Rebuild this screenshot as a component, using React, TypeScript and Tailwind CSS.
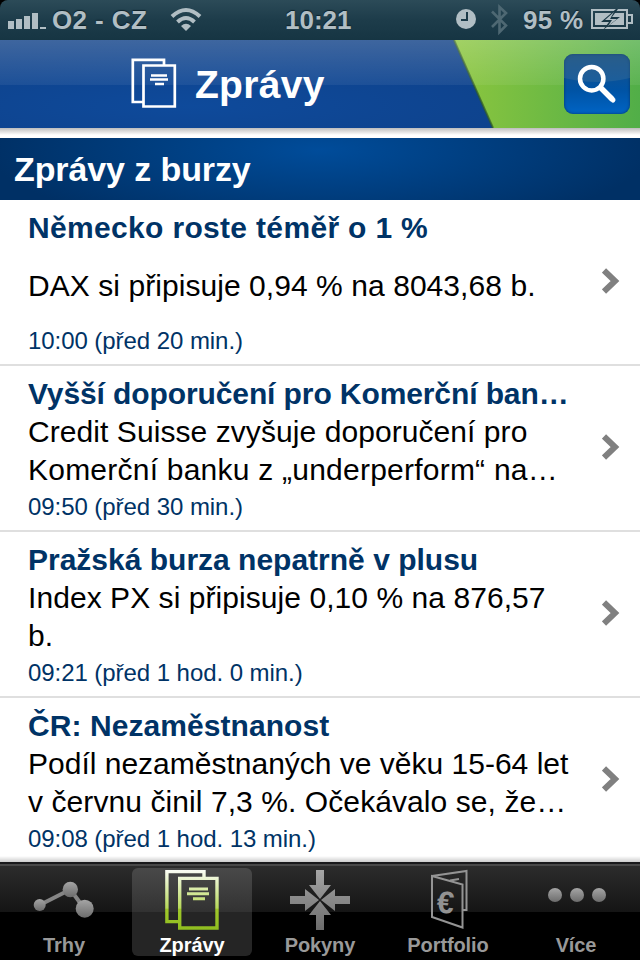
import React from 'react';

interface NewsLine {
  text: string;
  spacing: string;
}

interface NewsItem {
  title: string;
  titleSpacing: string;
  lines: NewsLine[];
  time: string;
}

const news: NewsItem[] = [
  {
    title: 'Německo roste téměř o 1 %',
    titleSpacing: 'tracking-[0.33px]',
    lines: [{ text: 'DAX si připisuje 0,94 % na 8043,68 b.', spacing: 'tracking-[0.06px] pt-0.5' }],
    time: '10:00 (před 20 min.)',
  },
  {
    title: 'Vyšší doporučení pro Komerční ban…',
    titleSpacing: 'tracking-[-0.1px]',
    lines: [
      { text: 'Credit Suisse zvyšuje doporučení pro', spacing: 'tracking-[0.07px]' },
      { text: 'Komerční banku z „underperform“ na…', spacing: 'tracking-[0.23px]' },
    ],
    time: '09:50 (před 30 min.)',
  },
  {
    title: 'Pražská burza nepatrně v plusu',
    titleSpacing: 'tracking-normal',
    lines: [
      { text: 'Index PX si připisuje 0,10 % na 876,57', spacing: 'tracking-[0.06px]' },
      { text: 'b.', spacing: 'tracking-normal' },
    ],
    time: '09:21 (před 1 hod. 0 min.)',
  },
  {
    title: 'ČR: Nezaměstnanost',
    titleSpacing: 'tracking-[0.07px]',
    lines: [
      { text: 'Podíl nezaměstnaných ve věku 15-64 let', spacing: 'tracking-normal' },
      { text: 'v červnu činil 7,3 %. Očekávalo se, že…', spacing: 'tracking-[0.08px]' },
    ],
    time: '09:08 (před 1 hod. 13 min.)',
  },
];

const StatusBar: React.FC = () => (
  <div className="h-10 shrink-0 bg-black">
    <div className="h-10 flex items-center rounded-t-lg bg-gradient-to-b from-[#2c4b58] via-[#1d3c4a] via-50% to-[#163543] text-[#b1bec4] text-[26px] font-bold leading-10 whitespace-nowrap [text-shadow:0_-1px_1px_#0c2029]">
      <svg className="ml-2 w-[38px] h-10 shrink-0" viewBox="0 0 38 40" fill="currentColor">
        <path d="M0 21h6v8H0zM8 19h6v10H8zM16 16h6v13h-6zM24 13h6v16h-6zM32 27h6v2h-6z" />
      </svg>
      <span className="ml-1.5 w-[96px] shrink-0 tracking-[0.4px]">O2 - CZ</span>
      <svg className="ml-[22px] w-8 h-10 shrink-0" viewBox="0 0 32 40" fill="none" stroke="currentColor" strokeWidth="4">
        <path d="M2 16.5Q16 3.5 30 16.5M7.500 22Q16 14 24.500 22" />
        <path d="M11 26Q16 21.500 21 26L16 31Z" fill="currentColor" stroke="none" />
      </svg>
      <span className="ml-[83px] w-[68px] shrink-0">10:21</span>
      <svg className="ml-[103px] w-5 h-10 shrink-0" viewBox="0 0 20 40">
        <circle cx="10" cy="19" r="10" fill="currentColor" />
        <path d="M11 12v8H5" fill="none" stroke="#1c3a48" strokeWidth="2" />
      </svg>
      <svg className="ml-3.5 w-5 h-10 shrink-0" viewBox="0 0 20 40" fill="none" stroke="#4e6873" strokeWidth="2.600">
        <path d="M2 11.500 16 25.500 9.500 32V7L16 13 2 27" />
      </svg>
      <span className="ml-[13px] w-[62px] shrink-0 tracking-[0.3px]">95 %</span>
      <svg className="ml-[6px] w-[43px] h-10 shrink-0" viewBox="0 0 43 40">
        <path d="M1 10h35v18H1zM37 15h4v8h-4" fill="none" stroke="currentColor" strokeWidth="2" />
        <path d="M4 13h29v12H4z" fill="currentColor" />
        <path d="M25 9 10 22h8l-6 8 17-13h-8l6-8z" fill="#183744" />
        <path d="M23 12 14 20h7l-4 6 9-7h-7z" fill="currentColor" />
      </svg>
    </div>
  </div>
);

const Header: React.FC = () => (
  <header className="relative h-[88px] shrink-0 flex items-center bg-[radial-gradient(ellipse_at_30%_75%,#0e4a9b,#0e3c80)]">
    <svg className="absolute inset-0 w-full h-full" viewBox="0 0 640 88">
      <defs>
        <linearGradient id="green" x1="0" x2="1">
          <stop offset="0" stopColor="#8cc63e" />
          <stop offset="1" stopColor="#51ae48" />
        </linearGradient>
        <linearGradient id="gloss" x1="0" x2="0" y1="0" y2="1">
          <stop offset="0" stopColor="#fff" stopOpacity="0.200" />
          <stop offset="1" stopColor="#fff" stopOpacity="0.060" />
        </linearGradient>
      </defs>
      <path d="M454 0H640V88H493Z" fill="url(#green)" />
      <path d="M454 0 493 88" stroke="#315c25" strokeWidth="2" opacity="0.700" />
      <path d="M0 0H640V45H0Z" fill="url(#gloss)" />
    </svg>
    <svg className="relative ml-[131px] w-[46px] h-[52px]" viewBox="0 0 46 52" fill="none" stroke="#fff" strokeWidth="2.700">
      <path d="M33 7V1.800H1.800V44H12M12.500 7.500H43.800V48.500H12.500Z" />
      <path d="M20 17.500H36M19 21.500H37M24 26H33" />
    </svg>
    <h1 className="relative ml-[18px] text-[39px] font-bold leading-none text-white tracking-[0.3px]">Zprávy</h1>
    <button className="relative ml-auto mr-2.5 w-[66px] h-[60px] rounded-[9px] overflow-hidden bg-gradient-to-b from-[#174f83] via-[#0053a4] via-60% to-[#0064c5] shadow-[inset_0_0_3px_#073465]">
      <svg className="w-full h-full" viewBox="0 0 66 60">
        <path d="M0 0H66V24Q33 32 0 24Z" fill="#5b839b" opacity="0.250" />
        <circle cx="27.700" cy="24.700" r="11.700" fill="none" stroke="#fff" strokeWidth="4.500" />
        <path d="m36 33 12.500 12.500" stroke="#fff" strokeWidth="5.500" />
        <path d="m46 43 3 3" stroke="#fff" strokeWidth="5" strokeLinecap="round" />
      </svg>
    </button>
  </header>
);

const NewsRow: React.FC<{ item: NewsItem }> = ({ item }) => (
  <article className="h-[166px] shrink-0 flex items-start justify-between border-b-2 border-[#dfdfdf] pl-7 pr-5 pt-[9px] whitespace-nowrap">
    <div className="w-[550px]">
      <h3 className={`text-[30px] leading-[38px] font-bold text-[#003366] ${item.titleSpacing}`}>{item.title}</h3>
      <div className="h-[76px] flex flex-col justify-center text-[30px] leading-[38px] text-black">
        {item.lines.map((line) => (
          <p key={line.text} className={line.spacing}>{line.text}</p>
        ))}
      </div>
      <p className="text-[24px] leading-9 tracking-[-0.06px] text-[#003366]">{item.time}</p>
    </div>
    <svg className="mt-[58px] w-[18px] h-7 shrink-0" viewBox="0 0 18 28" fill="none" stroke="#808080" strokeWidth="6">
      <path d="M2 3.500 13 14 2 24.500" />
    </svg>
  </article>
);

const ChartIcon = () => (
  <svg className="w-[62px] h-[62px] shrink-0" viewBox="0 0 62 62" fill="url(#grey)">
    <path d="M6.700 37 37.300 21.500 51.700 41" fill="none" stroke="#858585" strokeWidth="4" />
    <circle cx="6.700" cy="37" r="6" />
    <circle cx="37.300" cy="21.500" r="7.700" />
    <circle cx="51.700" cy="40.700" r="9" />
  </svg>
);

const NewsIcon = () => (
  <svg className="w-[54px] h-[62px] shrink-0" viewBox="0 0 54 62" fill="none" stroke="url(#lime)" strokeWidth="3.400">
    <path d="M39 9V3.600H1.900V53.600H13M14.700 10.400H52V60H14.700Z" />
    <path d="M24 21H43M22 25.800H44M28 30.700H40" strokeWidth="3" />
  </svg>
);

const OrdersIcon = () => (
  <svg className="w-[62px] h-[62px] shrink-0" viewBox="0 -1 62 62" fill="url(#grey)">
    <path d="M27 1h8v15h7L31 30 20 16h7zM27 61h8V46h7L31 32 20 46h7zM1 27v8h15v7L30 31 16 20v7zM61 27v8H46v7L32 31 46 20v7z" />
  </svg>
);

const PortfolioIcon = () => (
  <svg className="w-[40px] h-[62px] shrink-0" viewBox="0 0 40 62" fill="none" stroke="#949494" strokeWidth="2">
    <path d="M4 8 34.500 16.500V59.500L4 49ZM4 8 38.500 3V42H35M22 12.500 31 11" />
    <text x="9" y="45" fontSize="31" fontWeight="bold" fill="#929292" stroke="none" transform="rotate(5 18 34)">€</text>
  </svg>
);

const MoreIcon = () => (
  <svg className="w-[62px] h-[62px] shrink-0" viewBox="0 0 62 62" fill="url(#grey)">
    <circle cx="10" cy="27" r="7" />
    <circle cx="32" cy="27" r="7" />
    <circle cx="54" cy="27" r="7" />
  </svg>
);

const tabs = [
  { label: 'Trhy', icon: <ChartIcon /> },
  { label: 'Zprávy', icon: <NewsIcon />, active: true },
  { label: 'Pokyny', icon: <OrdersIcon /> },
  { label: 'Portfolio', icon: <PortfolioIcon /> },
  { label: 'Více', icon: <MoreIcon /> },
];

const TabBar: React.FC = () => (
  <nav className="h-[98px] shrink-0 grid grid-cols-5 gap-x-2 px-1 pt-1 border-t-2 border-[#19191b] bg-[linear-gradient(#484848_0px,#484848_2px,#2c2c2c_2px,#151515_48px,#000_48px)]">
    <svg className="absolute w-0 h-0">
      <defs>
        <linearGradient id="grey" x1="0" x2="0" y1="0" y2="1">
          <stop offset="0" stopColor="#a5a5a5" />
          <stop offset="1" stopColor="#6c6c6c" />
        </linearGradient>
        <linearGradient id="lime" gradientUnits="userSpaceOnUse" x1="0" x2="0" y1="0" y2="62">
          <stop offset="0" stopColor="#fff" />
          <stop offset="0.650" stopColor="#b7d958" />
          <stop offset="0.660" stopColor="#a0c82a" />
          <stop offset="1" stopColor="#8fbd20" />
        </linearGradient>
      </defs>
    </svg>
    {tabs.map((tab) => (
      <div
        key={tab.label}
        className={`h-[88px] flex flex-col items-center rounded-md text-[20px] font-bold leading-[30px] ${
          tab.active
            ? 'text-white bg-[linear-gradient(#494949_0px,#323232_44px,#252525_44px)]'
            : 'text-[#999]'
        }`}
      >
        {tab.icon}
        <span className="tracking-[-0.1px]">{tab.label}</span>
      </div>
    ))}
  </nav>
);

const App: React.FC = () => {
  return (
    <div className="w-[640px] h-[960px] flex flex-col overflow-hidden bg-white font-['Liberation_Sans',Arial,sans-serif]">
      <StatusBar />
      <Header />
      <div className="h-2.5 shrink-0 bg-gradient-to-b from-[#bdbdbd] to-white to-70%" />
      <h2 className="h-[62px] shrink-0 pl-[14px] text-[34px] leading-[63px] font-bold tracking-[-0.1px] text-white bg-[radial-gradient(ellipse_330px_85px_at_50%_12px,#004c9a,#003065)]">
        Zprávy z burzy
      </h2>
      <main className="relative flex-1 min-h-0 flex flex-col overflow-hidden">
        {news.map((item) => (
          <NewsRow key={item.title} item={item} />
        ))}
        {/* Shadow cast by the tab bar */}
        <div className="absolute inset-x-0 bottom-0 h-1.5 bg-gradient-to-b from-transparent to-black/20" />
      </main>
      <TabBar />
    </div>
  );
};

export default App;
